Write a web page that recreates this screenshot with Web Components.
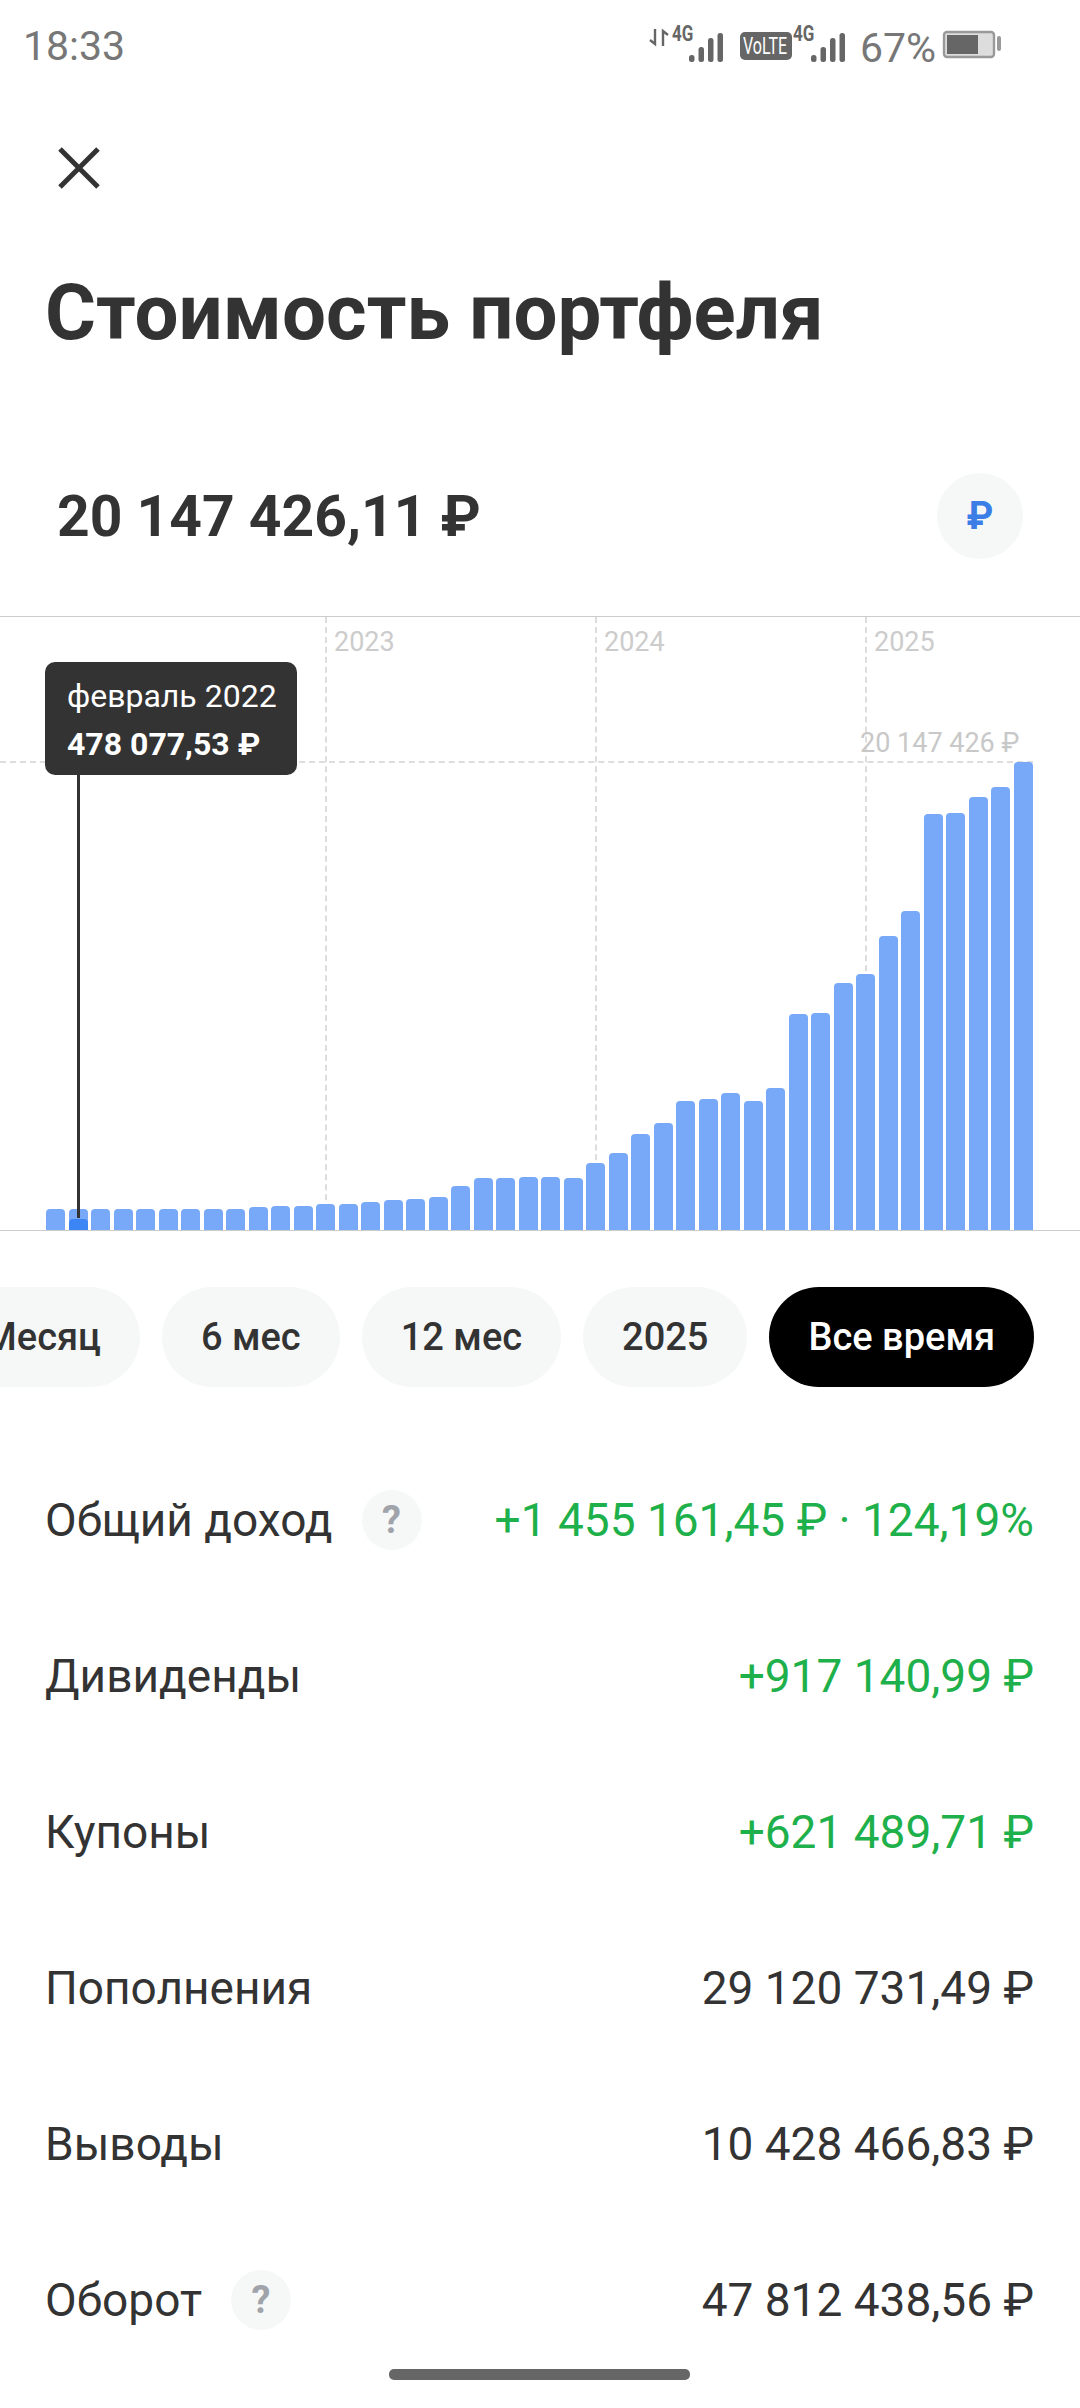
<!DOCTYPE html>
<html lang="ru">
<head>
<meta charset="utf-8">
<title>Стоимость портфеля</title>
<style>
    html, body {
        margin: 0;
        height: 2408px;
        overflow: hidden;
        background: #fff;
        font-family: Roboto, "Liberation Sans", sans-serif;
        color: #333;
    }

    app-screen {
        display: block;
        height: 2408px;
    }
</style>
</head>
<body>
<app-screen>
    <status-bar></status-bar>
    <screen-header>Стоимость портфеля</screen-header>
    <amount-row>20 147 426,11 ₽</amount-row>
    <value-chart></value-chart>
    <period-chips></period-chips>
    <stat-list>
        <stat-row label="Общий доход" hint tone="green">+1 455 161,45 ₽ · 124,19%</stat-row>
        <stat-row label="Дивиденды" tone="green">+917 140,99 ₽</stat-row>
        <stat-row label="Купоны" tone="green">+621 489,71 ₽</stat-row>
        <stat-row label="Пополнения">29 120 731,49 ₽</stat-row>
        <stat-row label="Выводы">10 428 466,83 ₽</stat-row>
        <stat-row label="Оборот" hint>47 812 438,56 ₽</stat-row>
    </stat-list>
    <home-bar></home-bar>
</app-screen>

<script>
class AppScreen extends HTMLElement {
    connectedCallback() {
        this.attachShadow({ mode: 'open' });
        this.shadowRoot.innerHTML = `
            <style>
                :host {
                    display: block;
                    position: relative;
                    overflow: hidden;
                }
            </style>
            <slot></slot>
        `;
    }
}

class StatusBar extends HTMLElement {
    connectedCallback() {
        this.attachShadow({ mode: 'open' });
        this.shadowRoot.innerHTML = `
            <style>
                :host {
                    display: flex;
                    align-items: flex-start;
                    justify-content: space-between;
                    height: 100px;
                    color: #777;
                }

                .time {
                    font-size: 41px;
                    line-height: 47px;
                    margin: 23px 0 0 23px;
                }

                svg {
                    display: block;
                }

                text {
                    font-family: Roboto, "Liberation Sans", sans-serif;
                }
            </style>
            <span class="time">18:33</span>
            <svg width="440" height="100" viewBox="640 0 440 100">
                <path d="M655 29v15l-5-4M663 46V31l5 4" fill="none" stroke="#666" stroke-width="2.4"/>
                <text transform="translate(672 41) scale(1 1.3)" font-size="17" font-weight="700" fill="#666">4G</text>
                <g fill="#666">
                    <rect x="689" y="55" width="5.5" height="7" rx="2.5"/>
                    <rect x="698.5" y="47" width="5.5" height="15" rx="2.5"/>
                    <rect x="708" y="38" width="5.5" height="24" rx="2.5"/>
                    <rect x="717.5" y="33" width="5.5" height="29" rx="2.5"/>
                    <rect x="740" y="32" width="52" height="28" rx="5"/>
                    <rect x="811" y="55" width="5.5" height="7" rx="2.5"/>
                    <rect x="820.5" y="47" width="5.5" height="15" rx="2.5"/>
                    <rect x="830" y="38" width="5.5" height="24" rx="2.5"/>
                    <rect x="839.5" y="33" width="5.5" height="29" rx="2.5"/>
                </g>
                <text transform="translate(743 54) scale(1 1.5)" font-size="16" fill="#fff">VoLTE</text>
                <text transform="translate(793 41) scale(1 1.3)" font-size="17" font-weight="700" fill="#666">4G</text>
                <text x="860" y="62" font-size="41" fill="#777">67%</text>
                <rect x="944" y="32" width="50" height="25" rx="3" fill="#ddd" stroke="#999" stroke-width="2.4"/>
                <rect x="947" y="35" width="31" height="19" fill="#666"/>
                <rect x="997" y="36" width="4" height="15" rx="2" fill="#999"/>
            </svg>
        `;
    }
}

class ScreenHeader extends HTMLElement {
    connectedCallback() {
        this.attachShadow({ mode: 'open' });
        this.shadowRoot.innerHTML = `
            <style>
                :host {
                    display: block;
                    padding-bottom: 26px;
                }

                .close {
                    display: flex;
                    align-items: center;
                    height: 136px;
                    padding-left: 58px;
                }

                h1 {
                    margin: 0;
                    height: 154px;
                    padding-left: 45px;
                    font-size: 78px;
                    line-height: 154px;
                    font-weight: 700;
                    color: #333;
                }
            </style>
            <div class="close">
                <svg width="42" height="42" viewBox="0 0 42 42">
                    <path d="M2 2 40 40M40 2 2 40" fill="none" stroke="#333" stroke-width="5"/>
                </svg>
            </div>
            <h1><slot></slot></h1>
        `;
    }
}

class AmountRow extends HTMLElement {
    connectedCallback() {
        this.attachShadow({ mode: 'open' });
        this.shadowRoot.innerHTML = `
            <style>
                :host {
                    display: flex;
                    align-items: center;
                    justify-content: space-between;
                    height: 200px;
                    padding: 0 57px;
                    font-size: 57px;
                    font-weight: 700;
                    color: #333;
                }

                .currency {
                    display: flex;
                    align-items: center;
                    justify-content: center;
                    width: 86px;
                    height: 86px;
                    border-radius: 50%;
                    background: #f6f8f8;
                    font-size: 38px;
                    color: #3b7fe6;
                }
            </style>
            <span><slot></slot></span>
            <span class="currency">₽</span>
        `;
    }
}

// bar heights in px, read off the reference
const BAR_HEIGHTS = [
    21, 21, 21, 21, 21, 21, 21, 21, 21, 23, 24,
    24, 26, 26, 28, 30, 31, 33, 44, 52, 52, 53,
    53, 52, 67, 77, 96, 107, 129, 131, 137, 129, 142,
    216, 217, 247, 256, 294, 319, 416, 417, 433, 443, 468
];

class ValueChart extends HTMLElement {
    connectedCallback() {
        this.attachShadow({ mode: 'open' });
        const bars = BAR_HEIGHTS.map((h, i) =>
            `<div class="bar" style="height:${h}px">${i === 1 ? '<div class="selected"></div>' : ''}</div>`
        ).join('');
        const years = [[325, '2023'], [595, '2024'], [865, '2025']].map(([x, year]) =>
            `<div class="vline" style="left:${x}px"></div><div class="year" style="left:${x + 9}px">${year}</div>`
        ).join('');
        this.shadowRoot.innerHTML = `
            <style>
                :host {
                    display: block;
                    position: relative;
                    height: 613px;
                    border-top: 1px solid #ccc;
                    border-bottom: 1px solid #ccc;
                    margin-bottom: 1px;
                }

                .bars {
                    position: absolute;
                    left: 46px;
                    bottom: 0;
                    display: flex;
                    align-items: flex-end;
                    gap: 3.5px;
                }

                .bar {
                    position: relative;
                    width: 19px;
                    background: #78a9f8;
                    border-radius: 4px 4px 0 0;
                }

                .selected {
                    position: absolute;
                    left: 0;
                    right: 0;
                    bottom: 0;
                    height: 11px;
                    background: #3b85f5;
                    border-radius: 4px 4px 0 0;
                }

                .vline {
                    position: absolute;
                    top: 0;
                    bottom: 0;
                    width: 0;
                    border-left: 2px dashed #ddd;
                }

                .hline {
                    position: absolute;
                    left: 0;
                    top: 144px;
                    width: 1033px;
                    border-top: 2px dashed #ddd;
                }

                .year, .peak {
                    position: absolute;
                    top: 9px;
                    font-size: 27px;
                    line-height: 33px;
                    color: #ccc;
                }

                .peak {
                    left: 860px;
                    top: 110px;
                    color: #c8c8c8;
                }

                .cursor {
                    position: absolute;
                    left: 77px;
                    top: 46px;
                    bottom: 12px;
                    width: 3px;
                    background: #333;
                }

                .tip {
                    position: absolute;
                    left: 45px;
                    top: 45px;
                    width: 252px;
                    height: 113px;
                    box-sizing: border-box;
                    padding: 10px 22px;
                    border-radius: 10px;
                    background: #333;
                    color: #fff;
                    font-size: 32px;
                    line-height: 48px;
                    white-space: nowrap;
                }

                .tip b {
                    display: block;
                    font-weight: 700;
                }
            </style>
            ${years}
            <div class="hline"></div>
            <div class="peak">20 147 426 ₽</div>
            <div class="bars">${bars}</div>
            <div class="cursor"></div>
            <div class="tip">февраль 2022<b>478 077,53 ₽</b></div>
        `;
    }
}

class PeriodChips extends HTMLElement {
    connectedCallback() {
        this.attachShadow({ mode: 'open' });
        const chips = ['Месяц', '6 мес', '12 мес', '2025', 'Все время'].map((label, i) =>
            `<span class="chip${i === 4 ? ' active' : ''}">${label}</span>`
        ).join('');
        this.shadowRoot.innerHTML = `
            <style>
                :host {
                    display: flex;
                    justify-content: flex-end;
                    gap: 22px;
                    padding: 55px 46px 55px 0;
                    overflow: hidden;
                }

                .chip {
                    flex: none;
                    height: 100px;
                    padding: 0 39px;
                    border-radius: 50px;
                    background: #f6f8f8;
                    font-size: 38px;
                    font-weight: 500;
                    line-height: 100px;
                    color: #333;
                }

                .active {
                    background: #000;
                    color: #fff;
                }
            </style>
            ${chips}
        `;
    }
}

class StatList extends HTMLElement {
    connectedCallback() {
        this.attachShadow({ mode: 'open' });
        this.shadowRoot.innerHTML = `
            <style>
                :host {
                    display: flex;
                    flex-direction: column;
                }
            </style>
            <slot></slot>
        `;
    }
}

class StatRow extends HTMLElement {
    connectedCallback() {
        this.attachShadow({ mode: 'open' });
        const hint = this.hasAttribute('hint') ? '<span class="hint">?</span>' : '';
        this.shadowRoot.innerHTML = `
            <style>
                :host {
                    display: flex;
                    align-items: center;
                    height: 156px;
                    padding: 0 46px 0 45px;
                    font-size: 46px;
                    color: #333;
                }

                .hint {
                    display: flex;
                    align-items: center;
                    justify-content: center;
                    width: 60px;
                    height: 60px;
                    margin-left: 29px;
                    border-radius: 50%;
                    background: #f6f8f8;
                    font-size: 38px;
                    font-weight: 700;
                    color: #a0a4aa;
                }

                .value {
                    margin-left: auto;
                }

                :host([tone="green"]) .value {
                    color: #1eb04a;
                }
            </style>
            <span>${this.getAttribute('label')}</span>
            ${hint}
            <span class="value"><slot></slot></span>
        `;
    }
}

class HomeBar extends HTMLElement {
    connectedCallback() {
        this.attachShadow({ mode: 'open' });
        this.shadowRoot.innerHTML = `
            <style>
                :host {
                    position: absolute;
                    left: 389px;
                    top: 2369px;
                    width: 301px;
                    height: 11px;
                    border-radius: 5px;
                    background: #666;
                }
            </style>
        `;
    }
}

customElements.define('app-screen', AppScreen);
customElements.define('status-bar', StatusBar);
customElements.define('screen-header', ScreenHeader);
customElements.define('amount-row', AmountRow);
customElements.define('value-chart', ValueChart);
customElements.define('period-chips', PeriodChips);
customElements.define('stat-list', StatList);
customElements.define('stat-row', StatRow);
customElements.define('home-bar', HomeBar);
</script>
</body>
</html>
